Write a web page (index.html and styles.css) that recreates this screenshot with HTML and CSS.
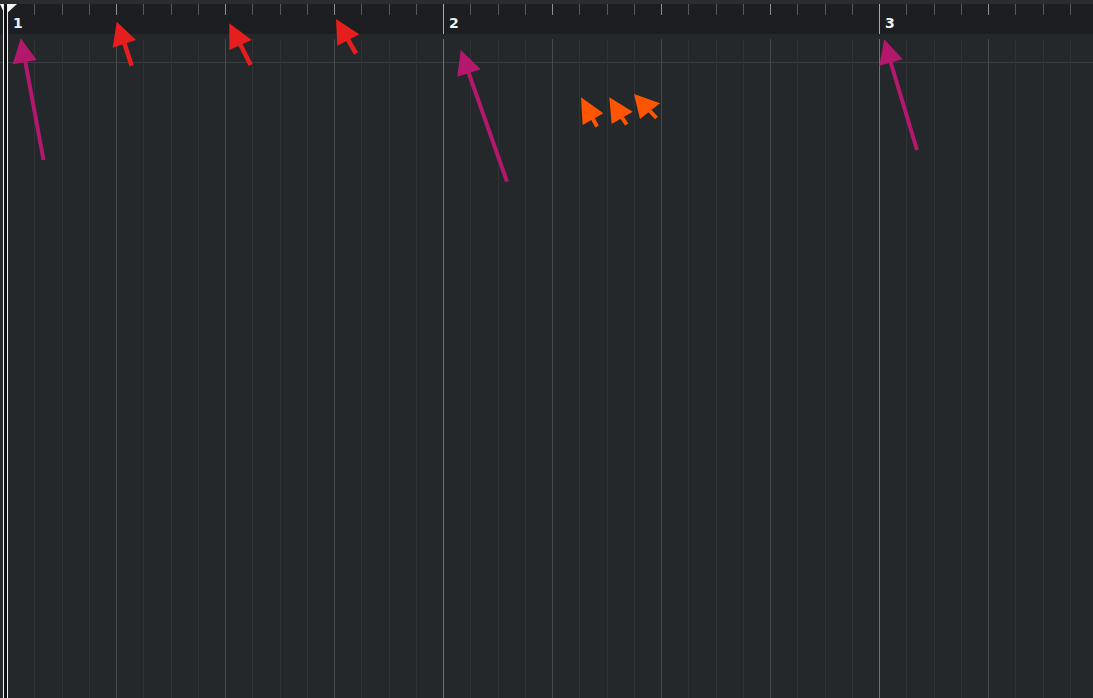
FILE: index.html
```html
<!DOCTYPE html>
<html>
<head>
<meta charset="utf-8">
<title>Timeline</title>
<link rel="stylesheet" href="styles.css">
</head>
<body>
<div class="app">
  <div class="strip"></div>
  <div class="ruler">
    <div class="bar">
      <i class="c m">1</i><i class="c"></i><i class="c"></i><i class="c"></i>
      <i class="c b"></i><i class="c"></i><i class="c"></i><i class="c"></i>
      <i class="c b"></i><i class="c"></i><i class="c"></i><i class="c"></i>
      <i class="c b"></i><i class="c"></i><i class="c"></i><i class="c"></i>
    </div>
    <div class="bar">
      <i class="c m">2</i><i class="c"></i><i class="c"></i><i class="c"></i>
      <i class="c b"></i><i class="c"></i><i class="c"></i><i class="c"></i>
      <i class="c b"></i><i class="c"></i><i class="c"></i><i class="c"></i>
      <i class="c b"></i><i class="c"></i><i class="c"></i><i class="c"></i>
    </div>
    <div class="bar">
      <i class="c m">3</i><i class="c"></i><i class="c"></i><i class="c"></i>
      <i class="c b"></i><i class="c"></i><i class="c"></i><i class="c"></i>
      <i class="c b"></i><i class="c"></i><i class="c"></i><i class="c"></i>
      <i class="c b"></i><i class="c"></i><i class="c"></i><i class="c"></i>
    </div>
  </div>
  <div class="grid">
    <div class="bar">
      <i class="c m"></i><i class="c"></i><i class="c"></i><i class="c"></i>
      <i class="c b"></i><i class="c"></i><i class="c"></i><i class="c"></i>
      <i class="c b"></i><i class="c"></i><i class="c"></i><i class="c"></i>
      <i class="c b"></i><i class="c"></i><i class="c"></i><i class="c"></i>
    </div>
    <div class="bar">
      <i class="c m"></i><i class="c"></i><i class="c"></i><i class="c"></i>
      <i class="c b"></i><i class="c"></i><i class="c"></i><i class="c"></i>
      <i class="c b"></i><i class="c"></i><i class="c"></i><i class="c"></i>
      <i class="c b"></i><i class="c"></i><i class="c"></i><i class="c"></i>
    </div>
    <div class="bar">
      <i class="c m"></i><i class="c"></i><i class="c"></i><i class="c"></i>
      <i class="c b"></i><i class="c"></i><i class="c"></i><i class="c"></i>
      <i class="c b"></i><i class="c"></i><i class="c"></i><i class="c"></i>
      <i class="c b"></i><i class="c"></i><i class="c"></i><i class="c"></i>
    </div>
  </div>

  <svg class="overlay" width="1093" height="698" viewBox="0 0 1093 698">
    <!-- locator -->
    <polygon class="loc" points="0,4 17,4 5,15"/>
    <rect class="locgap" x="4" y="4" width="3" height="694"/>
    <rect class="loc" x="3" y="4" width="1" height="694"/>
    <rect class="loc" x="7" y="4" width="1" height="694"/>

    <!-- magenta arrows -->
    <line class="mag" x1="25" y1="60" x2="43.5" y2="160"/>
    <polygon class="magf" points="20.7,38.3 12.7,64.3 36.7,60"/>
    <line class="mag" x1="468" y1="71" x2="507" y2="181.7"/>
    <polygon class="magf" points="460.7,50 457.3,76.7 480.7,69.3"/>
    <line class="mag" x1="890" y1="60" x2="917" y2="150"/>
    <polygon class="magf" points="884.3,39.3 879.3,65.7 902.7,59.3"/>

    <!-- red arrows -->
    <line class="red" x1="124" y1="42" x2="131.7" y2="65.7"/>
    <polygon class="redf" points="116.7,21.7 112.7,47.7 136,40"/>
    <line class="red" x1="240" y1="44" x2="250.7" y2="65"/>
    <polygon class="redf" points="229.3,23.3 229.3,50 251.7,40"/>
    <line class="red" x1="347" y1="38" x2="356" y2="53.5"/>
    <polygon class="redf" points="336,19 337.3,45.7 359.3,34.3"/>

    <!-- orange cursors -->
    <line class="org" x1="592" y1="117" x2="597" y2="126.5"/>
    <polygon class="orgf" points="581,97.3 582.7,125 603.3,113.3"/>
    <line class="org" x1="621" y1="116" x2="626.7" y2="124.5"/>
    <polygon class="orgf" points="609.3,97.3 611.7,124 632.7,111.7"/>
    <line class="org" x1="648" y1="109" x2="656.5" y2="118"/>
    <polygon class="orgf" points="634,94 640,119 660,103.3"/>
  </svg>
</div>
</body>
</html>
```

FILE: styles.css
```css
html, body {
  margin: 0;
  padding: 0;
  height: 100%;
  overflow: hidden;
  background: #24282b;
  font-family: "DejaVu Sans", "Liberation Sans", sans-serif;
}

.app {
  position: relative;
  height: 698px;
  display: flex;
  flex-direction: column;
  overflow: hidden;
}

.strip {
  flex: none;
  height: 4px;
  background: #2a2d30;
}

.ruler {
  flex: none;
  height: 30px;
  display: flex;
  padding-left: 7px;
  background: #1c1e21;
  overflow: hidden;
}

.bar {
  flex: none;
  display: flex;
  width: 436px;
}

.c {
  flex: none;
  display: block;
  width: 27.25px;
  box-sizing: border-box;
  font-style: normal;
}

.ruler .c {
  background: linear-gradient(#56595c, #56595c) 0 0 / 1px 11px no-repeat;
}

.ruler .c.b {
  background-image: linear-gradient(#8e9194, #8e9194);
}

.ruler .c.m {
  background: none;
  border-left: 1px solid #a6a9ac;
  color: #f0f0f0;
  font-weight: bold;
  font-size: 14px;
  line-height: 14px;
  padding: 12px 0 0 5px;
}

.grid {
  flex: 1;
  display: flex;
  padding: 5px 0 0 7px;
  overflow: hidden;
  background: #24282b linear-gradient(#3b3e41, #3b3e41) 0 28px / 100% 1px no-repeat;
}

.grid .c {
  border-left: 1px solid #2f3336;
}

.grid .c.b {
  border-left-color: #46494c;
}

.grid .c.m {
  border-left-color: #6d7073;
}

.overlay {
  position: absolute;
  top: 0;
  left: 0;
  pointer-events: none;
}

.loc { fill: #f2f2f2; }
.locgap { fill: #0f0f10; }

.mag { stroke: #b3186c; stroke-width: 4; }
.magf { fill: #b3186c; }
.red { stroke: #e61e1e; stroke-width: 4.5; }
.redf { fill: #e61e1e; }
.org { stroke: #ff5500; stroke-width: 4; }
.orgf { fill: #ff5500; }
```
